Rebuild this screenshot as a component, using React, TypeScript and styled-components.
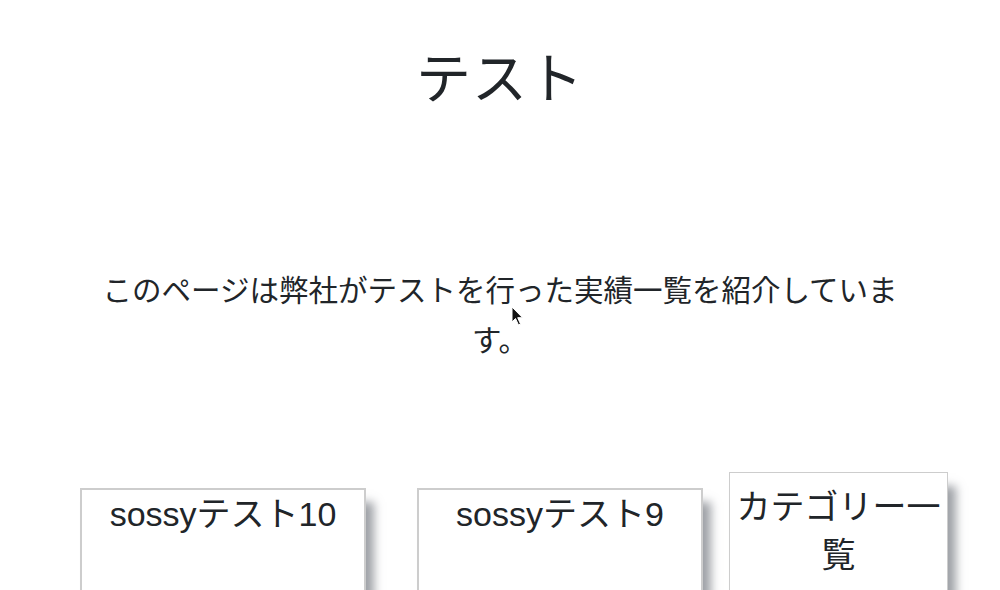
import React from 'react'
import styled, { createGlobalStyle } from 'styled-components'

const GlobalStyle = createGlobalStyle`
  html, body {
    margin: 0;
    padding: 0;
    background: #ffffff;
  }
  body {
    font-family: "Liberation Sans", "Noto Sans CJK JP", sans-serif;
    color: #212529;
    overflow: hidden;
  }
`

const Page = styled.div`
  position: relative;
  width: 1000px;
  height: 590px;
  overflow: hidden;
`

const Title = styled.h1`
  margin: 0;
  padding-top: 40px;
  text-align: center;
  font-size: 55px;
  font-weight: 400;
  line-height: 78px;
  letter-spacing: 1px;
`

const Lead = styled.p`
  width: 810px;
  margin: 148px auto 0;
  text-align: center;
  font-size: 29.5px;
  line-height: 50px;
  font-weight: 400;
`

const Cards = styled.div`
  display: flex;
  align-items: flex-start;
  margin: 106px 0 0 80px;
`

const Main = styled.div`
  display: flex;
  gap: 51px;
  margin-top: 16px;
`

const Card = styled.div<{ $w: number }>`
  box-sizing: border-box;
  width: ${({ $w }) => $w}px;
  height: 200px;
  border: 2px solid #cdcdcd;
  background: #fff;
  box-shadow: 10px 12px 9px -2px rgba(80, 85, 95, 0.55);
  text-align: center;
  font-size: 34px;
  line-height: 46px;
  padding: 1px 0 0;
`

const Side = styled(Card)`
  margin-left: 26px;
  border-width: 1px;
  padding: 10px 0 0;
  line-height: 48px;
`

const Cursor = styled.svg`
  position: absolute;
  left: 511px;
  top: 306px;
`

export default function App() {
  return (
    <Page>
      <GlobalStyle />
      <Title>テスト</Title>
      <Lead>このページは弊社がテストを行った実績一覧を紹介しています。</Lead>
      <Cards>
        <Main>
          <Card $w={286}>sossyテスト10</Card>
          <Card $w={286}>sossyテスト9</Card>
        </Main>
        <Side $w={219}>カテゴリー一覧</Side>
      </Cards>
      <Cursor width="14" height="22" viewBox="0 0 14 22">
        <path d="M1 1 L1 16 L4.5 12.5 L7.5 19 L9.5 18 L6.7 11.7 L11.5 11.7 Z" fill="#111" stroke="#fff" strokeWidth="1" />
      </Cursor>
    </Page>
  )
}
